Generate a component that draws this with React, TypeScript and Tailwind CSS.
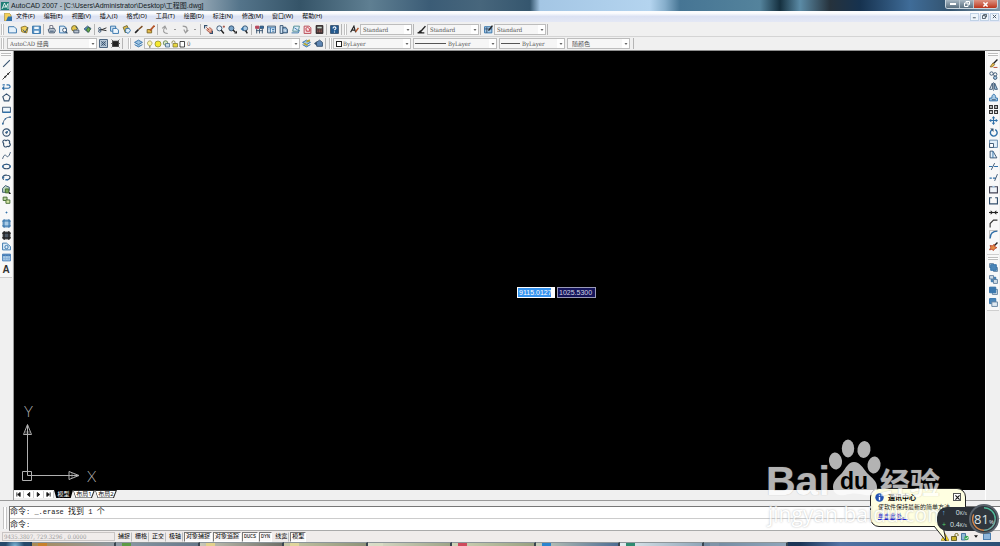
import type { ReactNode } from "react";

type Tool = { name: string; art: ReactNode };

const NAVY = "#34506e";
const BLUE = "#2f6fa8";
const SKY = "#a9cbe6";
const DARK = "#222";

function Art({ children }: { children: ReactNode }) {
  return (
    <svg viewBox="0 0 16 16" className="size-[9px] shrink-0" fill="none" stroke={NAVY} strokeWidth="1.6" aria-hidden="true">
      {children}
    </svg>
  );
}

function ToolButton({ name, art }: Tool) {
  return (
    <button type="button" aria-label={name} className="flex w-3 items-center justify-center">
      <Art>{art}</Art>
    </button>
  );
}

function Grip() {
  return <span className="mx-px h-[11px] w-[3px] shrink-0 border-x border-[#c2c2c2] bg-white" />;
}

function Rule() {
  return <span className="mx-px h-[11px] w-px shrink-0 bg-[#b5b5b5]" />;
}

const fileTools: Tool[] = [
  { name: "新建", art: <path d="M1 3h10l4 4v7H1z" fill="#e4f0fa" stroke={BLUE} /> },
  {
    name: "打开",
    art: (
      <>
        <path d="M2 4l7-2 5 3-2 9-9-2z" fill="#f0cf58" stroke="#8a7020" />
        <path d="M5 8l4 5 5-9" stroke={NAVY} />
      </>
    ),
  },
  {
    name: "保存",
    art: (
      <>
        <path d="M1 2h14v13H1z" fill="#5d95c4" stroke={BLUE} />
        <path d="M4 3h8v4H4zM4 10h8v4H4z" fill="#eef6fc" stroke="none" />
      </>
    ),
  },
];

const printTools: Tool[] = [
  {
    name: "打印",
    art: (
      <>
        <path d="M5 7V1h5l1 6" fill="#fff" stroke="#667" />
        <path d="M2 8l4-2h7l2 4-2 4H4z" fill="#b9c3cf" stroke="#46566b" />
        <path d="M5 11h7" />
      </>
    ),
  },
  {
    name: "打印预览",
    art: (
      <>
        <path d="M1 2h8l4 3v9H1z" fill="#e4f0fa" stroke={BLUE} />
        <circle cx="10" cy="9" r="3.5" fill="#fff" />
        <path d="M12 12l3 3" strokeWidth="2" />
      </>
    ),
  },
  {
    name: "发布",
    art: (
      <>
        <circle cx="6" cy="6" r="5" fill="#e6c64a" stroke="#6d6630" />
        <path d="M5 9h9v5H5z" fill="#b9c3cf" stroke="#46566b" />
        <path d="M8 3l5 4" />
      </>
    ),
  },
  {
    name: "三维 DWF",
    art: (
      <>
        <path d="M2 7l6-5 6 4-5 7z" fill="#4f8fc0" stroke={NAVY} />
        <path d="M6 9l3-5 4 3-3 6z" fill="#6aa84f" stroke="#3d6e32" />
      </>
    ),
  },
];

const editTools: Tool[] = [
  {
    name: "剪切",
    art: (
      <>
        <path d="M15 5L5 9M15 10L4 8" stroke={DARK} />
        <circle cx="3" cy="6.500" r="2" />
        <circle cx="3" cy="11" r="2" />
      </>
    ),
  },
  {
    name: "复制",
    art: (
      <>
        <path d="M1 2h9v9H1z" fill="#cfe3f3" stroke={BLUE} />
        <path d="M5 6h7l3 3v6H5z" fill="#eef6fc" stroke={BLUE} />
      </>
    ),
  },
  {
    name: "粘贴",
    art: (
      <>
        <path d="M2 4l7-3 3 7-6 6z" fill="#e2bd4c" stroke="#6d6630" />
        <path d="M7 6h6l2 4-4 5-5-3z" fill="#dcecf8" stroke={BLUE} />
      </>
    ),
  },
  {
    name: "特性匹配",
    art: (
      <>
        <path d="M15 2L8 8" stroke="#7a4a20" strokeWidth="2.500" />
        <path d="M8 8l-6 6" stroke={DARK} strokeWidth="3" />
      </>
    ),
  },
  {
    name: "块编辑器",
    art: (
      <>
        <path d="M2 8h8v6H2z" fill="#e2bd4c" stroke="#7d6320" />
        <path d="M15 1L7 10" stroke="#b4552a" strokeWidth="3" />
      </>
    ),
  },
];

const zoomTools: Tool[] = [
  {
    name: "实时平移",
    art: (
      <>
        <path d="M4 4l5 5M4 8l5 5h5V8l-4-4" fill="#e8b09c" stroke="#a14b3c" />
        <path d="M1 6V1h5M10 15h5v-5" strokeWidth="2" />
      </>
    ),
  },
  {
    name: "实时缩放",
    art: (
      <>
        <circle cx="6" cy="6" r="4.500" fill="#e4f0fa" />
        <path d="M9 9l5 6" stroke={DARK} strokeWidth="2.500" />
        <path d="M12 3h4M14 1v4" stroke="#a14b3c" />
      </>
    ),
  },
  {
    name: "窗口缩放",
    art: (
      <>
        <circle cx="6" cy="6" r="4.500" fill="#7ba5c8" />
        <path d="M9 9l4 4" stroke={DARK} strokeWidth="2.500" />
        <path d="M11 15h5v-5z" fill={DARK} stroke="none" />
      </>
    ),
  },
  {
    name: "缩放上一个",
    art: (
      <>
        <circle cx="9" cy="6" r="4.500" fill="#a9cbe6" />
        <path d="M10 10l3 5" stroke={DARK} strokeWidth="2.500" />
        <path d="M1 7l5-4v8z" fill={BLUE} stroke="none" />
      </>
    ),
  },
];

const paletteTools: Tool[] = [
  {
    name: "特性",
    art: (
      <>
        <path d="M1 2h6v4H1z" fill="#b8455a" stroke="#b8455a" />
        <path d="M9 2h6v4H9z" fill={BLUE} />
        <path d="M3 7v8M8 6v9M13 7v8M2 10h12" />
      </>
    ),
  },
  {
    name: "设计中心",
    art: (
      <>
        <path d="M1 2h14v12H1z" fill="#e4f0fa" />
        <path d="M1 5h14M6 5v9M9 8h4M9 11h4M3 8h1M3 11h1" stroke={BLUE} />
      </>
    ),
  },
  {
    name: "工具选项板",
    art: (
      <>
        <path d="M2 1h5v14H2z" fill="#cfe3f3" />
        <path d="M7 4h5l3 4v6H7z" fill="#7ba5c8" />
        <path d="M9 7v5M12 8v4" stroke="#fff" />
      </>
    ),
  },
  {
    name: "图纸集管理器",
    art: (
      <>
        <path d="M5 2h10l-2 9H3z" fill="#dcecf8" stroke="#4c8a92" />
        <path d="M1 14h12l2-5M6 5l6 4" stroke={BLUE} />
      </>
    ),
  },
  {
    name: "标记集管理器",
    art: (
      <>
        <path d="M2 2h9l3 3v10H2z" fill="#f4dfe0" stroke="#b44450" />
        <path d="M5 6l3-2 4 3v4H6z" stroke="#c22c3c" />
      </>
    ),
  },
  {
    name: "快速计算器",
    art: (
      <>
        <path d="M2 1h12v14H2z" fill="#3a3234" stroke="#2b2224" />
        <path d="M4 3h8v3H4z" fill="#c6d5c8" stroke="none" />
        <path d="M4 9h8M4 12h8" stroke="#b86a62" strokeDasharray="2 1" />
      </>
    ),
  },
];

const helpArt = (
  <>
    <path d="M1 1h14v14H1z" fill="#23598f" />
    <path d="M5.500 6c0-4 5.500-3 5 0-.3 1.500-2.500 1.500-2.500 3.500M8 11.500v2" stroke="#fff" strokeWidth="2" />
  </>
);

const drawTools: Tool[] = [
  { name: "直线", art: <path d="M2 14L14 2" strokeWidth="2" /> },
  { name: "构造线", art: <><path d="M1 15L15 1" stroke={DARK} /><path d="M5 11l2-2M10 6l2-2" stroke={DARK} strokeWidth="3" /></> },
  { name: "多段线", art: <path d="M1 5h4M1 11h10c5 0 4-6 0-6H8M4 8l-3 3 3 3" stroke={BLUE} strokeWidth="2" /> },
  { name: "正多边形", art: <path d="M8 1.500l6.500 5-2.500 7.500H4L1.500 6.500z" strokeWidth="2" /> },
  { name: "矩形", art: <><path d="M1 4h14v9H1z" fill="#eef6fc" /><path d="M1 13h14" stroke={BLUE} strokeWidth="2.500" /></> },
  { name: "圆弧", art: <><path d="M2 15C2 7 7 2 15 2" /><path d="M1 12v3M5 5h2M13 2h3" stroke={BLUE} strokeWidth="2.500" /></> },
  { name: "圆", art: <><circle cx="8" cy="8" r="6.500" strokeWidth="2" /><path d="M8 8l4-4" stroke={BLUE} /><circle cx="8" cy="8" r="1.500" fill={BLUE} /></> },
  { name: "修订云线", art: <path d="M3 8c-4-4 1-8 4-5 4-3 8 1 6 4 4 3 0 8-4 6-3 3-7 0-6-5z" strokeWidth="2" /> },
  { name: "样条曲线", art: <path d="M1 14c3-9 5-7 7-5s4 2 7-7" /> },
  { name: "椭圆", art: <><ellipse cx="8" cy="8" rx="6.500" ry="4" strokeWidth="2" /><path d="M0 8h3M13 8h3M8 3v2" stroke={BLUE} strokeWidth="3" /></> },
  { name: "椭圆弧", art: <><path d="M3 12C-2 6 5 3 9 4c7 0 7 7 0 8" strokeWidth="2" /><path d="M6 12h5M1 8h3" stroke={BLUE} strokeWidth="2.500" /></> },
  {
    name: "插入块",
    art: (
      <>
        <path d="M1 6l5-5 7 3v6l-5 3H1z" fill="#bcd5c0" />
        <path d="M6 7h6v7H6z" fill="#76a552" stroke="#41682c" />
        <path d="M13 11l3 5h-4z" fill={DARK} stroke="none" />
      </>
    ),
  },
  { name: "创建块", art: <><path d="M2 2h7v6H2z" fill="#b8d29e" stroke="#41682c" /><path d="M7 7h7v6H7z" fill="#d9e7a8" stroke="#41682c" /></> },
  { name: "点", art: <circle cx="8" cy="8" r="1" fill={BLUE} stroke={BLUE} /> },
  { name: "图案填充", art: <><path d="M2 2h12v12H2z" fill={SKY} stroke={BLUE} /><path d="M0 4h16M0 12h16M4 0v16M12 0v16" stroke={BLUE} strokeWidth="1" /></> },
  { name: "渐变色", art: <><path d="M2 2h12v12H2z" fill="#4b5663" stroke={DARK} /><path d="M0 4h16M0 12h16M4 0v16M12 0v16" stroke={DARK} /></> },
  { name: "面域", art: <><path d="M1 2h7l7 6v6H1z" fill="#dcecf8" stroke={BLUE} /><circle cx="8" cy="9" r="3" stroke={BLUE} /></> },
  { name: "表格", art: <><path d="M1 2h14v12H1z" fill="#a9cbe6" stroke="#4379b3" /><path d="M1 4h14" stroke="#4379b3" strokeWidth="3" /><path d="M1 10h14M6 4v10M11 4v10" stroke="#7ba5d4" strokeWidth="1" /></> },
];

const modifyTools: Tool[] = [
  { name: "删除", art: <><path d="M15 1L8 8" stroke={DARK} strokeWidth="2.500" /><path d="M7 7l3 3-4 4H2z" fill="#e6c04a" stroke="#8c6a2a" /><path d="M8 15h7" stroke="#b4442a" /></> },
  { name: "复制对象", art: <><circle cx="4.500" cy="4.500" r="3" /><circle cx="11" cy="6" r="3" /><circle cx="11" cy="12" r="3" fill={SKY} /></> },
  { name: "镜像", art: <><path d="M6 2v11H1z" /><path d="M10 2v11h5z" fill={SKY} /><path d="M8 0v16" strokeWidth="1" /></> },
  { name: "偏移", art: <><path d="M1 14V9h4c0-9 7-9 7 0h3v5z" fill={SKY} stroke={BLUE} /><path d="M5 12h7" /></> },
  { name: "阵列", art: <path d="M1 1h5v5H1zM10 1h5v5h-5zM1 10h5v5H1zM10 10h5v5h-5z" stroke="#333" strokeWidth="2" /> },
  { name: "移动", art: <><path d="M8 2v12M2 8h12" stroke={BLUE} strokeWidth="2" /><path d="M8 0l3 4H5zM8 16l3-4H5zM0 8l4-3v6zM16 8l-4-3v6z" fill={BLUE} stroke="none" /></> },
  { name: "旋转", art: <><path d="M5 3.500A6 6 0 1 0 11 3" stroke={BLUE} strokeWidth="2.500" /><path d="M2 1h6v6z" fill={NAVY} stroke="none" /></> },
  { name: "缩放", art: <><path d="M1 2h14v13H1z" fill="#e4f0fa" stroke="#5c83a8" /><path d="M1 8h7v7H1z" fill="#fff" /></> },
  { name: "拉伸", art: <><path d="M2 14V2h5l7 12z" fill="#e4f0fa" /><path d="M7 2v12" stroke={BLUE} /></> },
  { name: "修剪", art: <><path d="M0 8h6M9 8h7" stroke={BLUE} strokeWidth="2" /><path d="M4 14l6-12" stroke={NAVY} /></> },
  { name: "延伸", art: <><path d="M1 9h4M7 9h5" stroke={BLUE} strokeWidth="2" /><path d="M10 14l5-12" stroke={NAVY} /></> },
  { name: "打断于点", art: <><path d="M1 3h14v11H1z" fill="#eef3f8" stroke="#445" strokeWidth="2" /><path d="M6 3h4" stroke={SKY} strokeWidth="3" /></> },
  { name: "打断", art: <path d="M5 3H1v11h14V3h-4" stroke={NAVY} strokeWidth="2" /> },
  { name: "合并", art: <><path d="M0 8h16" stroke={DARK} strokeWidth="2" /><path d="M7 8L3 4v8zM9 8l4-4v8z" fill={DARK} stroke="none" /></> },
  { name: "倒角", art: <path d="M2 15V8l6-6h7" stroke="#333" strokeWidth="2" /> },
  { name: "圆角", art: <><path d="M2 15C2 6 6 2 15 2" stroke={BLUE} strokeWidth="2.500" /><path d="M1 15V1h14" stroke="#777" strokeWidth="0.800" /></> },
  { name: "分解", art: <><path d="M15 1L9 7" stroke={DARK} strokeWidth="2.500" /><path d="M2 6l4 1 3-3 1 4 4 2-4 2-2 3-3-2-4 1 2-4z" fill="#e48a44" stroke="#b4442a" /></> },
];

const orderTools: Tool[] = [
  { name: "前置", art: <><path d="M8 8h7v7H8zM1 1h7v7H1z" fill="#cfdbe6" stroke="#62809e" /><path d="M3 3h10v10H3z" fill="#4c86b8" stroke={BLUE} /></> },
  { name: "后置", art: <><path d="M4 4h8v8H4z" fill="#4c86b8" stroke={BLUE} /><path d="M1 1h7v6H1zM8 8h7v7H8z" fill="#cfdbe6" stroke="#62809e" /></> },
  { name: "置于对象之上", art: <><path d="M6 6h9v9H6z" fill="#cfdbe6" stroke="#62809e" /><path d="M1 2h11v10H1z" fill="#3c78ae" stroke={BLUE} /></> },
  { name: "置于对象之下", art: <><path d="M1 1h11v9H1z" fill="#4c86b8" stroke={BLUE} /><path d="M5 7h10v8H5z" fill="#dfe9f2" stroke="#62809e" /></> },
];

const menus = ["文件(F)", "编辑(E)", "视图(V)", "插入(I)", "格式(O)", "工具(T)", "绘图(D)", "标注(N)", "修改(M)", "窗口(W)", "帮助(H)"];

const modes = [
  { label: "捕捉", on: false },
  { label: "栅格", on: false },
  { label: "正交", on: false },
  { label: "极轴", on: false },
  { label: "对象捕捉", on: true },
  { label: "对象追踪", on: true },
  { label: "DUCS", on: true },
  { label: "DYN", on: true },
  { label: "线宽", on: false },
  { label: "模型", on: true },
];

function Combo({ label, value, width, lead, textPad = "pl-0.5" }: { label: string; value: string; width: string; lead?: ReactNode; textPad?: string }) {
  return (
    <label className={`flex h-[11px] shrink-0 items-center border border-[#bdbdbd] bg-[#f6f6f6] ${width}`}>
      {lead}
      <select
        aria-label={label}
        className={`h-full min-w-0 flex-1 appearance-none bg-transparent font-['DejaVu_Serif_Condensed','DejaVu_Serif','Noto_Sans_CJK_SC',serif] text-[6px] leading-[9px] text-[#555] ${textPad}`}
      >
        <option>{value}</option>
      </select>
      <span className="flex h-full w-[7px] shrink-0 items-center justify-center bg-white">
        <svg viewBox="0 0 6 4" className="h-[2px] w-[4px]" aria-hidden="true">
          <path d="M0 0h6L3 4z" fill="#666" />
        </svg>
      </span>
    </label>
  );
}

function TitleBar() {
  return (
    <header className="relative flex h-[11px] shrink-0 items-center overflow-hidden bg-[linear-gradient(90deg,#a9b7c3_0%,#b3c0cb_12%,#93a6b4_20%,#54748a_24%,#355468_30%,#5f7f92_37%,#3b5c76_43%,#47667c_48%,#35566e_53%,#a4c6e4_54%,#b4d4ef_65%,#86aecb_66.5%,#467594_68%,#54839c_76%,#15303f_78%,#5b8ba6_80%,#26323c_83%,#16324f_86%,#3f6c98_91%,#33536f_95%,#7f97a8_100%)]">
      <svg viewBox="0 0 16 16" className="ml-px size-[8px] shrink-0" aria-hidden="true">
        <path d="M0 0h16v16H0z" fill="#1d7d74" />
        <path d="M2 14L7 2l3 8 4-7v11M4 10h8" fill="none" stroke="#e6f6f2" strokeWidth="1.800" />
      </svg>
      <h1 className="ml-0.5 font-['Liberation_Sans','Noto_Sans_CJK_SC',sans-serif] text-[7px] leading-[11px] whitespace-nowrap text-[#141c24]">
        AutoCAD 2007 - [C:\Users\Administrator\Desktop\工程图.dwg]
      </h1>
      <div className="mr-[2px] ml-auto flex h-[9px] self-start overflow-hidden rounded-b-[3px] border border-t-0 border-[#c9d5de]">
        <button type="button" aria-label="最小化" className="flex w-[14px] items-center justify-center border-r border-[#b9c6d0] bg-linear-to-b from-[#a9b8c4] to-[#5b7080]">
          <span className="h-[2px] w-[6px] bg-white" />
        </button>
        <button type="button" aria-label="还原" className="flex w-[14px] items-center justify-center border-r border-[#b9c6d0] bg-linear-to-b from-[#a9b8c4] to-[#5b7080]">
          <svg viewBox="0 0 12 12" className="size-[6px]" fill="none" stroke="#fff" strokeWidth="2" aria-hidden="true">
            <path d="M4 3V1h7v6H9M1 4h7v7H1z" />
          </svg>
        </button>
        <button type="button" aria-label="关闭" className="flex w-[23px] items-center justify-center bg-linear-to-b from-[#dd9383] to-[#bb3218]">
          <svg viewBox="0 0 12 12" className="size-[5px]" stroke="#fff" strokeWidth="3.500" aria-hidden="true">
            <path d="M1 1l10 10M11 1L1 11" />
          </svg>
        </button>
      </div>
    </header>
  );
}

function MenuBar() {
  return (
    <nav aria-label="主菜单" className="flex h-[11px] shrink-0 items-center bg-linear-to-b from-[#fbfcfe] from-20% via-[#dce2f3] to-[#e4e8f5]">
      <svg viewBox="0 0 16 16" className="mr-[4px] ml-1 size-[8px]" aria-hidden="true">
        <path d="M1 0h9l4 4v12H1z" fill="#f2d05c" stroke="#8c7430" />
        <path d="M8 7h8v9H4z" fill="#2f6fa8" />
      </svg>
      <ul className="flex gap-[9px] font-['Noto_Sans','Noto_Sans_CJK_SC',sans-serif] text-[6px] leading-[11px] text-black">
        {menus.map((menu) => (
          <li key={menu}>
            <button type="button" className="block whitespace-nowrap">{menu}</button>
          </li>
        ))}
      </ul>
      <div className="mr-px ml-auto flex gap-px">
        {[
          { name: "最小化图形", d: "M2 9h7" },
          { name: "还原图形", d: "M4 4V1h7v6H8M1 4h7v7H1z" },
          { name: "关闭图形", d: "M2 2l8 8M10 2l-8 8" },
        ].map((item) => (
          <button key={item.name} type="button" aria-label={item.name} className="flex h-[8px] w-[9px] items-center justify-center border border-[#c0d2e6] bg-[#eef5fc]">
            <svg viewBox="0 0 12 12" className="size-[5px]" fill="none" stroke="#44525f" strokeWidth="2.200" aria-hidden="true">
              <path d={item.d} />
            </svg>
          </button>
        ))}
      </div>
    </nav>
  );
}

function Tools({ items }: { items: Tool[] }) {
  return items.map((tool) => <ToolButton key={tool.name} {...tool} />);
}

function Caret({ name }: { name: string }) {
  return (
    <button type="button" aria-label={name} className="flex w-2 items-center justify-center">
      <span className="h-px w-0.5 bg-[#999]" />
    </button>
  );
}

function StandardBar() {
  return (
    <div role="toolbar" aria-label="标准" className="flex h-[15px] shrink-0 items-center border-b border-[#d4d4d4] pt-px">
      <Grip />
      <div className="ml-px flex h-full items-center">
        <Tools items={fileTools} />
        <Rule />
        <Tools items={printTools} />
        <Rule />
        <Tools items={editTools} />
        <Rule />
        <ToolButton name="放弃" art={<path d="M12 15C3 15 3 9 7 4M2 6l5-4 3 6" stroke="#9a9a9a" strokeWidth="2" />} />
        <Caret name="放弃列表" />
        <ToolButton name="重做" art={<path d="M3 2c9 0 9 6 6 11M13 9l-5 5-3-6" stroke="#9a9a9a" strokeWidth="2" />} />
        <Caret name="重做列表" />
        <Rule />
        <Tools items={zoomTools} />
        <Rule />
        <Tools items={paletteTools} />
        <Rule />
        <ToolButton name="帮助" art={helpArt} />
      </div>
      <Rule />
      <Grip />
      <div className="flex items-center">
        <ToolButton name="文字样式管理器" art={<><path d="M1 13L7 2l3 11M4 9h5" stroke={DARK} strokeWidth="2" /><path d="M15 5l-5 7" stroke="#b4552a" strokeWidth="2.500" /></>} />
        <Combo label="文字样式" value="Standard" width="w-[52px]" />
        <Rule />
        <ToolButton name="标注样式管理器" art={<><path d="M1 14h12M15 2L7 11" stroke={DARK} strokeWidth="2.500" /><path d="M1 14l5-5 3 5z" fill={DARK} stroke="none" /></>} />
        <Combo label="标注样式" value="Standard" width="w-[52px]" />
        <Rule />
        <ToolButton name="表格样式管理器" art={<><path d="M1 3h13v11H1z" fill={SKY} stroke={BLUE} /><path d="M1 7h13M5 4v10" /><path d="M15 1L8 10" stroke={DARK} strokeWidth="2.500" /></>} />
        <Combo label="表格样式" value="Standard" width="w-[52px]" />
        <Rule />
      </div>
    </div>
  );
}

function LayerLead() {
  return (
    <svg viewBox="0 0 78 16" className="ml-px h-[8px] w-[39px] shrink-0" fill="none" strokeWidth="1.500" aria-hidden="true">
      <path d="M3 7c0-7 9-7 9 0 0 2-3 3-3 5H6c0-2-3-3-3-5z" fill="#fbf3a8" stroke="#9c9140" />
      <path d="M6 14h3" stroke="#555" strokeWidth="2" />
      <circle cx="24" cy="8" r="6" fill="#f6e92f" stroke="#8d8a2c" />
      <circle cx="39" cy="6" r="4.500" fill="#d7e6c9" stroke="#55783f" />
      <path d="M39 7h8v7h-8z" fill="#c7dbea" stroke="#44688a" />
      <path d="M52 7V4c0-3 6-3 6 0v3" stroke="#7d7530" />
      <path d="M54 7h9v7h-9z" fill="#e8d63f" stroke="#7d7530" />
      <path d="M68 3h9v11h-9z" fill="#fff" stroke="#111" />
    </svg>
  );
}

const layerStack = <path d="M1 6l7-4 7 4-7 4zM1 10l7 4 7-4" fill="#9cc3e2" stroke={BLUE} />;

function LayerBar() {
  return (
    <div role="toolbar" aria-label="图层与特性" className="flex h-[14px] shrink-0 items-center border-b border-[#8e8e8e]">
      <Grip />
      <div className="ml-0.5 flex items-center">
        <Combo label="工作空间" value="AutoCAD 经典" width="w-[90px]" />
        <ToolButton name="工作空间设置" art={<><path d="M1 1h14v14H1z" fill="#c2d2e0" /><path d="M4 4l8 8M12 4l-8 8" /><circle cx="8" cy="8" r="3" /></>} />
        <ToolButton name="我的工作空间" art={<><path d="M3 4h10v9H3z" fill={DARK} stroke={DARK} /><path d="M1 1l3 3M1 15l3-3M15 1l-3 3M15 15l-3-3M0 8h3M13 8h3" stroke="#555" /></>} />
        <Rule />
      </div>
      <span className="w-[3px]" />
      <Grip />
      <div className="flex items-center">
        <ToolButton name="图层特性管理器" art={layerStack} />
        <Combo label="图层" value="0" width="w-[156px]" lead={<LayerLead />} />
        <ToolButton name="将对象的图层置为当前" art={<>{layerStack}<path d="M8 5l6-3M3 8l7 3" stroke="#b9a72b" strokeWidth="3" /></>} />
        <ToolButton name="上一个图层" art={<><path d="M4 6l6-4 5 4v7H5z" fill="#5e86b4" /><path d="M0 8l5-4v8z" fill={NAVY} stroke="none" /></>} />
        <Rule />
      </div>
      <span className="w-px" />
      <Grip />
      <div className="flex items-center gap-0.5">
        <Combo
          label="颜色"
          value="ByLayer"
          width="w-[78px]"
          textPad="pl-px"
          lead={<span className="ml-0.5 size-[6px] shrink-0 border border-[#222] bg-white" />}
        />
        <Combo label="线型" value="ByLayer" width="w-[84px]" textPad="pl-0.5" lead={<span className="ml-px h-px w-[31px] shrink-0 bg-[#555]" />} />
        <Combo label="线宽" value="ByLayer" width="w-[66px]" textPad="pl-0.5" lead={<span className="ml-px h-px w-[19px] shrink-0 bg-[#555]" />} />
        <Combo label="打印样式" value="随颜色" width="w-[63px]" textPad="pl-1" />
        <Rule />
      </div>
    </div>
  );
}

function SideGrip() {
  return <span className="mx-auto my-0.5 h-[3px] w-[10px] shrink-0 border-y border-[#bdbdbd] bg-white" />;
}

function SideTools({ label, height, rows, children }: { label: string; height: string; rows: Tool[]; children?: ReactNode }) {
  return (
    <div role="toolbar" aria-label={label} className="flex flex-col border-b border-[#cfcfcf] bg-[#f8f8f8] pb-0.5">
      <SideGrip />
      <div className={`grid auto-rows-fr justify-center ${height}`}>
        <Tools items={rows} />
        {children}
      </div>
    </div>
  );
}

function DrawingArea() {
  return (
    <section aria-label="绘图区" className="relative min-h-0 flex-1 bg-black">
      <div className="absolute top-[236px] left-[503px] flex gap-0.5 font-['Liberation_Sans',sans-serif] text-[7px] leading-[9px]">
        <input
          aria-label="X 坐标"
          defaultValue="9115.0127"
          className="h-[11px] w-[38px] border border-white bg-[linear-gradient(90deg,#3592ee_33px,#fff_33px)] pl-px text-white"
        />
        <input aria-label="Y 坐标" defaultValue="1025.5300" className="h-[11px] w-[39px] border border-[#9a9ab8] bg-[#14145a] pl-px text-[#d4d4e4]" />
      </div>
      <svg viewBox="0 0 90 86" className="absolute bottom-0 left-0 h-[86px] w-[90px]" fill="none" stroke="#b0b0b0" aria-hidden="true">
        <path d="M8.500 67.500h9v9h-9zM13.500 71.500V21M13.500 71.500H65" />
        <path d="M9.500 30.500l4-10 4 10zM55 67.500l10 4-10 4z" />
        <path d="M58 69v5M61 70v3M12 27v3M15 27v3" strokeWidth="0.600" />
      </svg>
      <span className="absolute bottom-[70px] left-[10px] font-['Lato',sans-serif] text-[15px] leading-[18px] font-light text-[#b4b4b4]">Y</span>
      <span className="absolute bottom-[5px] left-[73px] font-['Lato',sans-serif] text-[15px] leading-[18px] font-light text-[#b4b4b4]">X</span>
    </section>
  );
}

function LayoutTabs() {
  return (
    <div className="flex h-[8px] shrink-0 items-center bg-[#f0f0f0] font-['Noto_Sans','Noto_Sans_CJK_SC',sans-serif] text-[6px] leading-[7px] text-[#111]">
      {[
        { name: "首个布局", d: "M2 1v10M10 1L4 6l6 5z" },
        { name: "上一个布局", d: "M9 1L3 6l6 5z" },
        { name: "下一个布局", d: "M3 1l6 5-6 5z" },
        { name: "末个布局", d: "M10 1v10M2 1l6 5-6 5z" },
      ].map((item) => (
        <button key={item.name} type="button" aria-label={item.name} className="flex h-[7px] w-[10px] items-center justify-center border-r border-[#ccc] bg-white">
          <svg viewBox="0 0 12 12" className="size-[5px]" fill="#111" stroke="#111" strokeWidth="2" aria-hidden="true">
            <path d={item.d} />
          </svg>
        </button>
      ))}
      <div role="tablist" className="flex">
        <button type="button" role="tab" aria-selected="true" className="h-[8px] w-[19px] bg-black text-white [clip-path:polygon(0_0,100%_0,88%_100%,12%_100%)]">
          模型
        </button>
        {["布局1", "布局2"].map((tab) => (
          <button
            key={tab}
            type="button"
            role="tab"
            aria-selected="false"
            className="h-[8px] w-[22px] bg-[#222] p-0 [clip-path:polygon(0_0,100%_0,86%_100%,12%_100%)]"
          >
            <span className="block h-[7px] bg-white [clip-path:polygon(3%_0,94%_0,82%_100%,14%_100%)]">{tab}</span>
          </button>
        ))}
      </div>
    </div>
  );
}

function CommandLine() {
  return (
    <section aria-label="命令行" className="flex h-[31px] shrink-0 border-t border-[#999] bg-[#f0f0f0] pt-[5px]">
      <span className="mt-px mr-0.5 ml-[3px] h-[22px] w-[4px] border-x border-[#c4c4c4] bg-white" />
      <div className="flex min-w-0 flex-1 flex-col border-t border-b border-l border-[#777] border-b-[#aaa] bg-white font-['Liberation_Mono','Noto_Sans_CJK_SC',monospace] text-[7px] leading-[9px] text-[#222]">
        <p className="h-[12px] border-b border-[#ccc] whitespace-pre">
          <span className="text-[8px]">命令</span>: _.erase <span className="text-[8px]">找到</span> 1 <span className="text-[8px]">个</span>
        </p>
        <label className="flex h-[11px] items-center">
          <span><span className="text-[8px]">命令</span>:</span>
          <input aria-label="命令" className="h-[10px] min-w-0 flex-1 bg-transparent pl-1 outline-none" />
        </label>
      </div>
    </section>
  );
}

function TrayIcons() {
  return (
    <div className="mr-[9px] ml-auto flex items-center gap-0.5">
      <svg viewBox="0 0 16 16" className="size-[8px]" aria-hidden="true">
        <path d="M8 1l8 14H0z" fill="#f7d51c" stroke="#7b6a10" />
        <path d="M8 5v5M8 12v2" stroke="#111" strokeWidth="2" />
      </svg>
      <svg viewBox="0 0 16 16" className="size-[8px]" fill="none" aria-hidden="true">
        <path d="M8 8V3c0-3 6-3 6 0v3" stroke="#6f6415" strokeWidth="2" />
        <path d="M1 7h10v8H1z" fill="#c9b12a" stroke="#4d4510" strokeWidth="1.500" />
      </svg>
      <svg viewBox="0 0 16 16" className="size-[8px]" fill="none" aria-hidden="true">
        <path d="M1 1h8v13H1z" fill="#8fb9d4" stroke="#23598f" strokeWidth="1.500" />
        <circle cx="11" cy="10" r="4.500" fill="#3da757" />
        <path d="M9 10l2 2 3-4" stroke="#fff" strokeWidth="1.500" />
      </svg>
      <svg viewBox="0 0 6 4" className="mx-[3px] h-[3px] w-[4px]" aria-hidden="true">
        <path d="M0 0h6L3 4z" fill="#111" />
      </svg>
      <span className="h-[7px] w-[8px] border border-[#4e7fae] bg-[#8db5da]" />
    </div>
  );
}

function StatusBar() {
  return (
    <footer className="flex h-[11px] shrink-0 items-center bg-[#f0eceb] pl-0.5">
      <output className="h-[9px] w-[113px] shrink-0 border border-[#c9c5c4] pl-px font-['DejaVu_Serif_Condensed','DejaVu_Serif',serif] text-[6px] leading-[7px] whitespace-nowrap text-[#999]">
        9435.3807, 729.3296 , 0.0000
      </output>
      <div className="ml-px flex gap-px font-['Liberation_Mono','Noto_Sans_CJK_SC',monospace] leading-[8px] text-black">
        {modes.map((mode) => (
          <button
            key={mode.label}
            type="button"
            aria-pressed={mode.on}
            className={`h-[10px] border px-px whitespace-nowrap ${/^[A-Z]/.test(mode.label) ? "text-[5px]" : "text-[6px]"} ${mode.on ? "border-[#777] border-r-white border-b-white bg-[#faf8f8]" : "border-transparent border-r-[#bbb]"}`}
          >
            {mode.label}
          </button>
        ))}
      </div>
      <TrayIcons />
    </footer>
  );
}

const tasks = [
  { name: "资源管理器", look: "from-[#a98a54] to-[#8f9aa2]", chip: "bg-[#c7812c]" },
  { name: "浏览器", look: "from-[#8d9aa5] to-[#66788a]", chip: "bg-[#5d9a45]" },
  { name: "文件夹一", look: "from-[#c9c9ba] to-[#6f7068]", chip: "bg-[#e3d28c]" },
  { name: "文件夹二", look: "from-[#c9c9a8] to-[#8d9278]", chip: "bg-[#e0d59c]" },
  { name: "文件夹三", look: "from-[#dcdfcc] to-[#9ea487]", chip: "bg-[#d8dcc4]" },
  { name: "文档", look: "from-[#d0d5b8] to-[#98a080]", chip: "bg-[#cf4a5c]" },
  { name: "网页", look: "from-[#c8cdb8] to-[#4d6c92]", chip: "bg-[#2c84cf]" },
  { name: "图纸", look: "from-[#e3edf0] to-[#8fa5b8]", chip: "bg-[#2f8a70]" },
  { name: "窗口", look: "from-[#71889f] to-[#8fa5ba]", chip: "bg-[#8094a8]" },
];

function TaskBar() {
  return (
    <nav aria-label="任务栏" className="flex h-[4px] shrink-0 overflow-hidden bg-[linear-gradient(90deg,#24415f_0%,#1c3557_80%,#5272a4_84%,#3d6590_92%,#2c4f74_100%)]">
      <button type="button" aria-label="开始" className="mr-0.5 w-[30px] shrink-0 bg-[radial-gradient(circle_at_50%_100%,#7bb5d6,#26496a_60%)]" />
      {tasks.map((task) => (
        <button key={task.name} type="button" aria-label={task.name} className={`w-[84px] border-t border-r-2 border-t-[#8d959a] border-r-[#3a4650] bg-linear-to-r pl-[6px] ${task.look}`}>
          <span className={`block h-[3px] w-[9px] ${task.chip}`} />
        </button>
      ))}
    </nav>
  );
}

function InfoBalloon() {
  return (
    <aside className="absolute right-[34px] bottom-[19px] h-[39px] w-[96px] rounded-[9px] border border-[#222] bg-[#ffffe1] font-['Noto_Sans','Noto_Sans_CJK_SC',sans-serif] text-[6px] leading-[9px] text-[#222]">
      <div className="flex h-[14px] items-center pt-0.5 pr-1 pl-1">
        <svg viewBox="0 0 16 16" className="size-[9px]" aria-hidden="true">
          <circle cx="8" cy="8" r="7.500" fill="#2454b4" />
          <path d="M8 3v2M8 7v6" stroke="#fff" strokeWidth="2.500" />
        </svg>
        <h2 className="ml-1 text-[7px] font-bold text-black">通讯中心</h2>
        <button type="button" aria-label="关闭通知" className="ml-auto flex size-[8px] items-center justify-center border border-[#555] bg-white">
          <svg viewBox="0 0 12 12" className="size-[5px]" stroke="#111" strokeWidth="2.500" aria-hidden="true">
            <path d="M1 1l10 10M11 1L1 11" />
          </svg>
        </button>
      </div>
      <p className="pl-[7px] whitespace-nowrap">使软件保持最新的简单方法。</p>
      <a href="#updates" className="block pl-[7px] text-[#1a1ad0] underline">单击此处。</a>
      <svg viewBox="0 0 14 16" className="absolute top-[37px] left-[62px] h-[16px] w-[14px]" aria-hidden="true">
        <path d="M1 0l12 15L10 0" fill="#ffffe1" stroke="#222" />
      </svg>
    </aside>
  );
}

function Watermark() {
  return (
    <div className="pointer-events-none absolute right-[52px] bottom-[18px] h-[90px] w-[182px] opacity-70">
      <span className="absolute top-[20px] left-0 font-['Liberation_Sans',sans-serif] text-[41px] leading-[46px] font-bold text-white [text-shadow:0_0_1px_#999]">Bai</span>
      <svg viewBox="0 0 56 60" className="absolute top-0 left-[62px] h-[60px] w-[56px]" fill="#fff" aria-hidden="true">
        <ellipse cx="7.500" cy="23" rx="6.500" ry="8.500" transform="rotate(-8 7.500 23)" />
        <ellipse cx="20" cy="10.500" rx="6.200" ry="9" />
        <ellipse cx="36" cy="11.500" rx="6.500" ry="8.500" transform="rotate(10 36 11.500)" />
        <ellipse cx="46" cy="27" rx="6.500" ry="8.500" transform="rotate(8 46 27)" />
        <path d="M26 24c6 0 9 6 13 11 5 5 10 8 10 14 0 8-7 9-12 8-7-2-14-2-20 0-6 1-12-1-12-8 0-6 5-10 9-14 4-5 6-11 12-11z" />
      </svg>
      <span className="absolute top-[29px] left-[74px] font-['Liberation_Sans',sans-serif] text-[23px] leading-[28px] font-bold text-black">du</span>
      <span className="absolute top-[25px] left-[114px] font-['Noto_Sans_CJK_SC',sans-serif] text-[30px] leading-[36px] font-bold text-white [text-shadow:0_0_1px_#999]">经验</span>
      <span className="absolute top-[64px] left-0.5 font-['Open_Sans',sans-serif] text-[21px] leading-[24px] text-white [text-shadow:0_0_2px_#999]">jingyan.baidu.com</span>
    </div>
  );
}

function SpeedWidget() {
  return (
    <aside aria-label="网速" className="absolute right-px bottom-[12px] flex h-[30px] w-[62px] items-center font-['Open_Sans',sans-serif]">
      <div className="flex h-[24px] w-[48px] flex-col justify-between rounded-l-[10px] bg-[#2b3036] py-px pl-[5px] text-[7px] leading-[10px] text-[#dfe5ea]">
        <p className="flex w-[25px] justify-between"><span className="text-[#6dbbe8]">↑</span><span>0<small className="text-[5px]">K/s</small></span></p>
        <p className="flex w-[25px] justify-between"><span className="text-[#4fd06a]">+</span><span>0.4<small className="text-[5px]">K/s</small></span></p>
      </div>
      <div className="absolute right-0 flex size-[30px] items-center justify-center rounded-full border-2 border-[#5a636c] bg-[#30363d] text-[#dfe5ea]">
        <svg viewBox="0 0 30 30" className="absolute size-[28px]" fill="none" strokeWidth="1.500" aria-hidden="true">
          <path d="M15 3a12 12 0 0 1 12 12" stroke="#4fb99a" />
          <path d="M27 15a12 12 0 0 1-12 12" stroke="#6fa8a0" />
          <path d="M15 27A12 12 0 0 1 4 10" stroke="#d8894c" />
        </svg>
        <span className="text-[13px] leading-[16px]">81</span>
        <span className="mt-[5px] text-[6px] leading-[8px]">%</span>
      </div>
    </aside>
  );
}

export default function App() {
  return (
    <div className="relative flex h-screen min-h-[420px] flex-col overflow-hidden bg-[#f0f0f0]">
      <TitleBar />
      <MenuBar />
      <StandardBar />
      <LayerBar />
      <main className="flex min-h-0 flex-1">
        <div className="w-[14px] shrink-0 border-r border-[#9a9a9a] pr-px">
          <SideTools label="绘图" height="h-[217px]" rows={drawTools}>
            <button type="button" aria-label="多行文字" className="flex w-3 items-center justify-center font-['Liberation_Sans',sans-serif] text-[10px] leading-[11px] font-bold text-[#333]">
              A
            </button>
          </SideTools>
        </div>
        <div className="flex min-w-0 flex-1 flex-col pb-[2px]">
          <DrawingArea />
          <LayoutTabs />
        </div>
        <div className="w-[15px] shrink-0 border-l border-white pr-px pl-px">
          <SideTools label="修改" height="h-[194px]" rows={modifyTools} />
          <SideTools label="绘图次序" height="h-[46px]" rows={orderTools} />
        </div>
      </main>
      <CommandLine />
      <StatusBar />
      <TaskBar />
      <InfoBalloon />
      <Watermark />
      <SpeedWidget />
    </div>
  );
}
